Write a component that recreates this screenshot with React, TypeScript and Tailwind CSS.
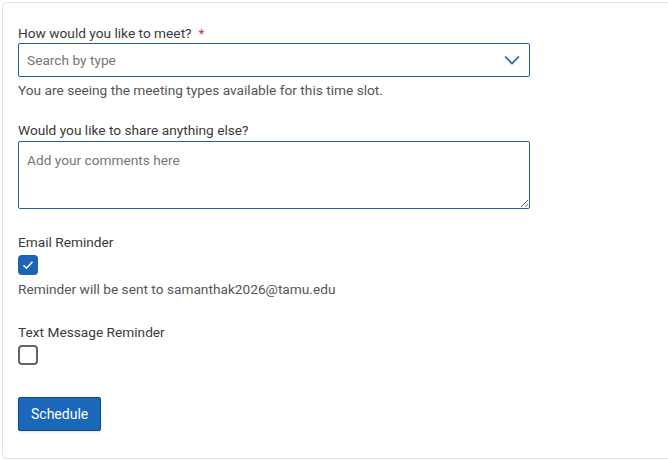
import { useState } from "react";

function Chevron() {
  return (
    <svg width="16" height="10" viewBox="0 0 16 10" fill="none">
      <path d="M1 1.5 L8 8.5 L15 1.5" stroke="#1f5fa8" strokeWidth="1.6" />
    </svg>
  );
}

function Check() {
  return (
    <svg width="12" height="10" viewBox="0 0 12 10" fill="none">
      <path d="M1.5 5.2 L4.5 8.2 L10.5 1.8" stroke="#fff" strokeWidth="1.6" />
    </svg>
  );
}

export default function App() {
  const [email, setEmail] = useState(true);
  const [text, setText] = useState(false);

  return (
    <div
      className="w-full h-[460px] overflow-hidden bg-white text-[13.7px] leading-5 text-[#3a3a3a]"
      style={{ fontFamily: "Roboto, 'Liberation Sans', sans-serif" }}
    >
      <div className="mt-[2px] ml-[2px] w-[700px] border border-[#e3e3e3] rounded-[4px] pl-[15px] pt-[20px] pb-[27px]">
        <div className="flex flex-col w-[512px]">
          <label className="flex gap-[7px]">
            How would you like to meet?
            <span className="text-[#c0392b]">*</span>
          </label>
          <div className="h-[34px] border border-[#1f5fa8] rounded-[2px] flex items-center justify-between pl-[8px] pr-[9px]">
            <span className="text-[#767676] -mt-[1px]">Search by type</span>
            <Chevron />
          </div>
          <p className="mt-[3px] text-[#555]">
            You are seeing the meeting types available for this time slot.
          </p>

          <label className="mt-[20px]">Would you like to share anything else?</label>
          <textarea
            className="mt-[1px] h-[68px] border border-[#1f5fa8] rounded-[2px] px-[8px] py-[8px] resize-y placeholder:text-[#767676] outline-none"
            placeholder="Add your comments here"
          />

          <span className="mt-[23px]">Email Reminder</span>
          <button
            onClick={() => setEmail(!email)}
            className={
              email
                ? "mt-[3px] w-[20px] h-[20px] rounded-[4px] bg-[#1d64b4] flex items-center justify-center"
                : "mt-[3px] w-[20px] h-[20px] rounded-[4px] border-2 border-[#666]"
            }
          >
            {email && <Check />}
          </button>
          <p className="mt-[4px] text-[#555]">Reminder will be sent to samanthak2026@tamu.edu</p>

          <span className="mt-[23px]">Text Message Reminder</span>
          <button
            onClick={() => setText(!text)}
            className={
              text
                ? "mt-[3px] w-[20px] h-[20px] rounded-[4px] bg-[#1d64b4] flex items-center justify-center"
                : "mt-[3px] w-[20px] h-[20px] rounded-[4px] border-2 border-[#666]"
            }
          >
            {text && <Check />}
          </button>

          <div className="mt-[32px]">
            <button className="h-[34px] px-[12px] text-[14px] bg-[#1b67b9] border border-[#0f4a8a] rounded-[2px] text-white shadow-sm">
              Schedule
            </button>
          </div>
        </div>
      </div>
    </div>
  );
}
